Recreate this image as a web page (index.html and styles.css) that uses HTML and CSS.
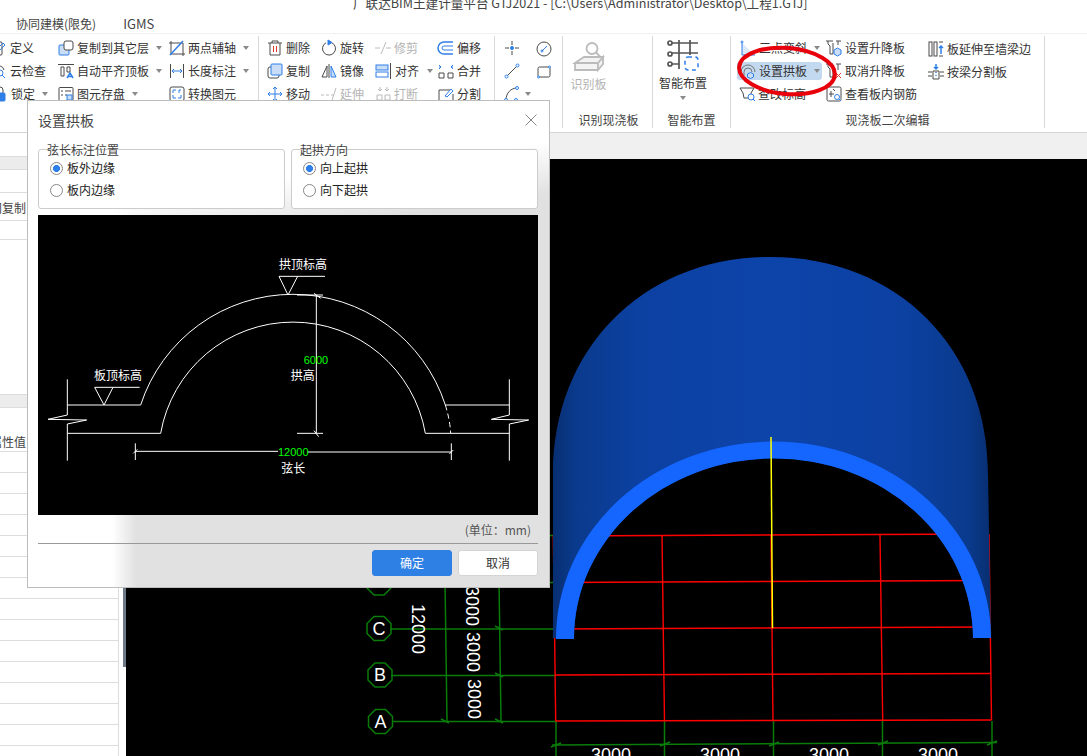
FILE: index.html
```html
<!DOCTYPE html>
<html lang="zh-CN">
<head>
<meta charset="utf-8">
<title>广联达BIM土建计量平台 GTJ2021</title>
<link rel="stylesheet" href="styles.css">
</head>
<body>
<div class="app">
  <div class="titlebar"><span class="title">广联达BIM土建计量平台 GTJ2021 - [C:\Users\Administrator\Desktop\工程1.GTJ]</span></div>
  <div class="tabs"><span class="tab">协同建模(限免)</span><span class="tab tab-en">IGMS</span></div>

  <div class="ribbon">
    <div class="group g-a">
      <div class="cols">
        <div class="col w67">
          <div class="item"><svg class="ic" viewBox="0 0 16 16"><rect x="1" y="2" width="10" height="13" rx="1"/><path class="b" d="M4 11l8-8 2 2-8 8-3 1z"/></svg>定义</div>
          <div class="item"><svg class="ic" viewBox="0 0 16 16"><path d="M4 13a4 4 0 0 1 0-8 5 5 0 0 1 9 2"/><circle class="b" cx="9" cy="10" r="3"/><path class="b" d="M11 12l3 3"/></svg>云检查</div>
          <div class="item"><svg class="ic ml1" viewBox="0 0 16 16"><path d="M5 7V4a3 3 0 0 1 6 0v3"/><rect class="b fb" x="3" y="7" width="10" height="8" rx="1"/></svg>锁定<i class="arrow"></i></div>
        </div>
        <div class="col w111">
          <div class="item"><svg class="ic" viewBox="0 0 16 16"><rect class="b fl" x="1" y="5" width="10" height="10" rx="1"/><rect class="fw" x="6" y="1" width="9" height="9" rx="2"/></svg>复制到其它层<i class="arrow"></i></div>
          <div class="item"><svg class="ic" viewBox="0 0 16 16"><path d="M0 1.500h16M3 4h3v9H3zM9 4h3v5H9z"/><path class="b s2" d="M9 15l3-5 3 5M10 13.500h4"/></svg>自动平齐顶板<i class="arrow"></i></div>
          <div class="item"><svg class="ic" viewBox="0 0 16 16"><rect x="1" y="1.500" width="14" height="13" rx="1"/><path d="M3 5h2M7 5h6M3 9h2M7 9h2"/><rect class="b fl" x="9" y="9" width="5" height="5"/></svg>图元存盘<i class="arrow"></i></div>
        </div>
        <div class="col">
          <div class="item"><svg class="ic" viewBox="0 0 16 16"><path d="M2 3h12v11H2zM0 3h2M14 14h2M2 1v2M14 14v2"/><path class="b s2" d="M1 15L14 1"/></svg>两点辅轴<i class="arrow"></i></div>
          <div class="item"><svg class="ic" viewBox="0 0 16 16"><path d="M1.500 1v14M14.500 1v14"/><path class="b" d="M3 8h10M5 6L3 8l2 2M11 6l2 2-2 2"/></svg>长度标注<i class="arrow"></i></div>
          <div class="item"><svg class="ic" viewBox="0 0 16 16"><rect x="1" y="1" width="14" height="14" rx="2"/><path class="b" d="M4 7V4h3M12 4h-2v3M4 9v3h3M9 12h3V9"/></svg>转换图元</div>
        </div>
      </div>
    </div>

    <div class="group g-b">
      <div class="cols">
        <div class="col w54">
          <div class="item"><svg class="ic" viewBox="0 0 16 16"><path d="M1 3h14M5 3V1h6v2M3 3v12h10V3"/><path class="r" d="M6.500 6v6M9.500 6v6"/></svg>删除</div>
          <div class="item"><svg class="ic" viewBox="0 0 16 16"><rect x="1" y="4" width="11" height="11" rx="2"/><rect class="b fl" x="4" y="1" width="11" height="11" rx="1"/></svg>复制</div>
          <div class="item"><svg class="ic" viewBox="0 0 16 16"><path class="b" d="M8 1v14M1 8h14M6 3l2-2 2 2M6 13l2 2 2-2M3 6L1 8l2 2M13 6l2 2-2 2"/></svg>移动</div>
        </div>
        <div class="col w54">
          <div class="item"><svg class="ic" viewBox="0 0 16 16"><path d="M5 2.800A6.500 6.500 0 1 0 11 2.800"/><path class="b fb" d="M7 0l4 2.500L7 5z"/></svg>旋转</div>
          <div class="item"><svg class="ic" viewBox="0 0 16 16"><path d="M6 3L1 14h5z"/><path class="b fl" d="M10 3l5 11h-5z"/><path d="M8 1v14"/></svg>镜像</div>
          <div class="item dim"><svg class="ic" viewBox="0 0 16 16"><path d="M0 9h3M5 9h3M10 9h2M15 2l-4 12"/></svg>延伸</div>
        </div>
        <div class="col w63">
          <div class="item dim"><svg class="ic" viewBox="0 0 16 16"><path d="M0 8h5M11 8h5M11 2L6 14"/></svg>修剪</div>
          <div class="item tight"><svg class="ic" viewBox="0 0 16 16"><rect class="b fl" x="1" y="2" width="12" height="5"/><rect class="b" x="1" y="9" width="12" height="5"/><path d="M15.500 0v16"/></svg>对齐<i class="arrow"></i></div>
          <div class="item dim"><svg class="ic" viewBox="0 0 16 16"><path d="M2 9h5v5H2zM10 9h5v5h-5zM5 1v4M3 3l2 2 2-2M12 1v4M10 3l2 2 2-2"/></svg>打断</div>
        </div>
        <div class="col">
          <div class="item"><svg class="ic" viewBox="0 0 16 16"><path class="b s2" d="M15 2H6a6 6 0 0 0 0 12h9"/><path class="b" d="M15 6H6a2 2 0 0 0 0 4h9"/></svg>偏移</div>
          <div class="item"><svg class="ic" viewBox="0 0 16 16"><path d="M1 10h5v5H1zM10 10h5v5h-5z"/><path class="b" d="M1 2l2 2-2 2M3 4H1M15 2l-2 2 2 2M13 4h2"/></svg>合并</div>
          <div class="item"><svg class="ic" viewBox="0 0 16 16"><path d="M12 4H1v11h14V8"/><path class="b" d="M7 10l6-7 2 2-6 6z"/></svg>分割</div>
        </div>
      </div>
    </div>

    <div class="group g-c">
      <div class="cols">
        <div class="col w32">
          <div class="item"><svg class="ic" viewBox="0 0 16 16"><path d="M1 8h4M11 8h4M8 1v4M8 11v4"/><circle class="fb b" cx="8" cy="8" r="1.500"/></svg></div>
          <div class="item"><svg class="ic" viewBox="0 0 16 16"><path d="M2 14L14 2"/><circle class="b fw" cx="2.500" cy="13.500" r="1.500"/><circle class="b fw" cx="13.500" cy="2.500" r="1.500"/></svg></div>
          <div class="item"><svg class="ic" viewBox="0 0 16 16"><path d="M2 14C2 7 7 2 13 2"/><circle class="b fw" cx="2" cy="14" r="1.500"/><circle class="b fw" cx="13" cy="2" r="1.500"/><circle class="b fw" cx="12" cy="14" r="1.500"/></svg><i class="arrow a2"></i></div>
        </div>
        <div class="col">
          <div class="item"><svg class="ic" viewBox="0 0 16 16"><circle cx="8" cy="8" r="7"/><path class="b" d="M6 10l5-5"/><circle class="b" cx="6" cy="10" r="1"/></svg></div>
          <div class="item"><svg class="ic" viewBox="0 0 16 16"><rect x="2" y="3" width="12" height="10" rx="1.500"/><circle class="b fw" cx="2.500" cy="13" r="1"/><circle class="b fw" cx="13.500" cy="3" r="1"/></svg></div>
        </div>
      </div>
    </div>

    <div class="group g-d">
      <div class="big dim2">
        <svg class="ic-big" viewBox="0 0 30 30"><circle cx="18" cy="6.500" r="5.500"/><path d="M22 10.500l4 4"/><path class="gf" d="M1 21l9-6h19l-5 6zM1 21h23v7H1zM24 21l5-6v7l-5 6z"/></svg>
        <span class="big-label">识别板</span>
      </div>
      <div class="glabel">识别现浇板</div>
    </div>

    <div class="group g-e">
      <div class="big">
        <svg class="ic-big dark" viewBox="0 0 30 30"><path d="M11 0v29M22 0v15M4 3h26M4 13h26M4 24h7"/><circle class="fw2" cx="2" cy="3" r="2"/><circle class="fw2" cx="2" cy="14" r="2"/><circle class="fw2" cx="2" cy="24" r="2"/><rect class="b s2" x="17" y="17" width="13" height="13" rx="3" stroke-dasharray="4 3.400"/></svg>
        <span class="big-label">智能布置</span>
        <i class="arrow a3"></i>
      </div>
      <div class="glabel">智能布置</div>
    </div>

    <div class="group g-f">
      <div class="cols h69">
        <div class="col w86">
          <div class="item"><svg class="ic" viewBox="0 0 16 16"><path class="fl0" d="M2 3v12h13z"/><path class="b" d="M2 2v13h13"/><circle class="b fw" cx="2" cy="2" r="1"/></svg>三点变斜<i class="arrow"></i></div>
          <div class="item active"><svg class="ic" viewBox="0 0 16 16"><path d="M1 14V9a7 7 0 0 1 14 0M4 13V9a4 4 0 0 1 8 0" class="g"/><path class="b fl" d="M10.500 9.500l3 1.500v3l-3 1.500-3-1.500v-3z"/></svg>设置拱板<i class="arrow"></i></div>
          <div class="item tight2"><svg class="ic" viewBox="0 0 16 16"><path d="M0 2h14l-3 5v5H4L3 7z"/><circle class="b fw" cx="11" cy="11" r="3"/><path class="b" d="M13 13l2 2"/></svg>查改标高</div>
        </div>
        <div class="col w102">
          <div class="item"><svg class="ic" viewBox="0 0 16 16"><path d="M0 1h7M10 1h5M2 1v3l2 2v8h3V3M12 1v4"/><path class="b fl" d="M11.500 8l3.500 2v4l-3.500 2L8 14v-4z"/></svg>设置升降板</div>
          <div class="item"><svg class="ic" viewBox="0 0 16 16"><path d="M0 1h7M10 1h5M2 1v3l2 2v8h3V3M12 1v6"/><path class="r" d="M10 10l5 5M15 10l-5 5"/></svg>取消升降板</div>
          <div class="item"><svg class="ic" viewBox="0 0 16 16"><rect x="1" y="1" width="14" height="14" rx="1.500"/><path d="M5 5v6M3 8h5M7 3l2 2"/><circle class="b fw" cx="11" cy="11" r="2.500"/><path class="b" d="M13 13l2 2"/></svg>查看板内钢筋</div>
        </div>
        <div class="col">
          <div class="item"><svg class="ic" viewBox="0 0 16 16"><rect x="1" y="1" width="3" height="14"/><rect x="6" y="1" width="3" height="14"/><path d="M11 1h4M11 15h4"/><path class="b s2" d="M13 13V5M11 7l2-2 2 2"/></svg>板延伸至墙梁边</div>
          <div class="item"><svg class="ic" viewBox="0 0 16 16"><path d="M0 8h4M12 8h4M0 12h4M12 12h4M5 7h6v8H5z"/><path class="b s2" d="M8 0v5M6 3l2 2 2-2M8 8v1M8 11v1"/></svg>按梁分割板</div>
        </div>
      </div>
      <div class="glabel">现浇板二次编辑</div>
    </div>
  </div>

  <div class="main">
    <div class="side">
      <div class="s-top"></div>
      <div class="s-head"></div>
      <div class="s-row h23"></div>
      <div class="s-row h28 cut"><span class="cut-a">层间复制</span></div>
      <div class="s-row h19"></div>
      <div class="s-blank"></div>
      <div class="s-head"></div>
      <div class="s-row h44 cut"><span class="cut-b">属性值</span></div>
      <div class="s-fill"></div>
    </div>
    <div class="splitter"><div class="thumb"><i class="thumb-arrow"></i></div></div>
    <div class="work">
      <div class="strip"></div>
      <svg class="canvas" viewBox="126 159 961 597">
        <defs>
          <linearGradient id="domeFill" x1="0" x2="1" y1="0" y2="0">
            <stop offset="0" stop-color="#082e70"/>
            <stop offset=".05" stop-color="#0a3a8c"/>
            <stop offset=".2" stop-color="#0c41a2"/>
            <stop offset=".5" stop-color="#0d44aa"/>
            <stop offset=".8" stop-color="#0c41a2"/>
            <stop offset=".95" stop-color="#0a3a8c"/>
            <stop offset="1" stop-color="#082e70"/>
          </linearGradient>
        </defs>
        <g class="axis">
          <path d="M392 721.500H556M391 675.500H556M390 629H556M390 582.500H556M500 535.500H556"/>
          <path d="M445 580L447 722M499 580L501 722"/>
          <path d="M556 721V756M664.500 721V756M773.500 721V756M882.500 721V756M992 721V756"/>
          <path d="M552 745L997 742.500"/>
          <path d="M551 747l10-4M660 746l10-4M769 746l10-4M878 745l10-4M987 745l10-4M441 719l8 4M495 719l8 4M495 673l8 4M495 626l8 4"/>
          <polygon points="-5,-12 5,-12 12,-5 12,5 5,12 -5,12 -12,5 -12,-5" transform="translate(380.500,721.500)"/>
          <polygon points="-5,-12 5,-12 12,-5 12,5 5,12 -5,12 -12,5 -12,-5" transform="translate(380,675)"/>
          <polygon points="-5,-12 5,-12 12,-5 12,5 5,12 -5,12 -12,5 -12,-5" transform="translate(379,628.500)"/>
          <polygon points="-5,-12 5,-12 12,-5 12,5 5,12 -5,12 -12,5 -12,-5" transform="translate(379,583)"/>
        </g>
        <g class="grid">
          <path d="M553 536L989 534M553 582.500L990 580.500M554 629L990 627M555 675L990.500 673.500M555.500 721L991.500 720"/>
          <path d="M553.300 535L555.700 721M662 535L664.500 721M771 535L773 721M880 535L882.700 720M989 534L991.500 720"/>
        </g>
        <path class="dome" fill-rule="evenodd" d="M553 638V474C553 348 644 257 770.500 257S988 348 988 474L991 638ZM574 638A199.500 180 0 0 1 973 638Z"/>
        <path class="arch" fill-rule="evenodd" d="M556 639A217.500 197 0 0 1 991 638L973 638A199.500 180 0 0 0 574 639Z"/>
        <path class="yellow" d="M771 437L772.500 628"/>
        <g class="labels">
          <text x="380.500" y="727.500">A</text>
          <text x="380" y="681">B</text>
          <text x="379" y="634.500">C</text>
          <text x="611" y="761">3000</text>
          <text x="720" y="761">3000</text>
          <text x="829" y="761">3000</text>
          <text x="938" y="761">3000</text>
          <text transform="translate(412,629) rotate(90)">12000</text>
          <text transform="translate(466,606) rotate(90)">3000</text>
          <text transform="translate(467,652) rotate(90)">3000</text>
          <text transform="translate(468,699) rotate(90)">3000</text>
        </g>
      </svg>
    </div>
  </div>
</div>

<svg class="ring" viewBox="0 0 110 60"><ellipse cx="55" cy="30" rx="48" ry="23" transform="rotate(5 55 30)"/></svg>

<div class="dialog">
  <div class="d-head"><span class="d-title">设置拱板</span><svg class="d-close" viewBox="0 0 12 12"><path d="M.5.5l11 11M11.500.5l-11 11"/></svg></div>
  <div class="d-groups">
    <div class="gbox">
      <div class="legend">弦长标注位置</div>
      <div class="radio"><i class="dot on"></i>板外边缘</div>
      <div class="radio"><i class="dot"></i>板内边缘</div>
    </div>
    <div class="gbox">
      <div class="legend">起拱方向</div>
      <div class="radio"><i class="dot on"></i>向上起拱</div>
      <div class="radio"><i class="dot"></i>向下起拱</div>
    </div>
  </div>
  <svg class="figure" viewBox="0 -75 1500 900">
    <path class="fw-line" fill="none" d="M723 109H861M723 109L750 165L779 109M170 442H305M170 442L198 495L225 442"/>
    <path class="fw-line" fill="none" d="M308 495A480.500 480.500 0 0 1 1222 495M368 580A403 403 0 0 1 1162 580"/>
    <path class="fw-line" fill="none" stroke-dasharray="16 10" d="M1222 495Q1236 540 1238 580"/>
    <path class="fw-line" fill="none" d="M88 418V525L30 538L146 540L88 552V662M88 495H308M88 580H368M1222 495H1414M1162 580H1414M1414 418V525L1360 538L1472 540L1414 552V662"/>
    <path class="fw-line" fill="none" d="M835 165V580M777 165H855M777 580H855M828 160L848 175M828 572L842 590"/>
    <path class="fw-line" fill="none" d="M292 634H720M808 636H1240M292 610V660M1240 610V660M286 640L298 628M1234 642L1246 630"/>
    <g class="wtext">
      <text x="723" y="86">拱顶标高</text>
      <text x="168" y="419">板顶标高</text>
      <text x="758" y="419">拱高</text>
      <text x="730" y="700">弦长</text>
    </g>
    <g class="gtext">
      <text x="797" y="372">6000</text>
      <text x="720" y="648">12000</text>
    </g>
  </svg>
  <div class="d-unit">(单位：mm)</div>
  <div class="d-foot">
    <button class="btn primary">确定</button>
    <button class="btn">取消</button>
  </div>
</div>
</body>
</html>
```

FILE: styles.css
```css
* { box-sizing: border-box; }
html, body { margin: 0; padding: 0; }
body {
  width: 1087px;
  height: 756px;
  overflow: hidden;
  position: relative;
  background: #fff;
  color: #333;
  font-family: "Noto Sans CJK SC", "Liberation Sans", sans-serif;
  font-size: 12px;
}
.app { display: flex; flex-direction: column; height: 756px; }

.titlebar { height: 14px; padding-left: 353px; overflow: hidden; }
.title { display: block; margin-top: -5px; font-size: 12.600px; line-height: 16px; color: #444; white-space: nowrap; }
.tabs { height: 19px; display: flex; gap: 27px; padding-left: 16px; align-items: center; color: #444; font-size: 12px; line-height: 16px; }
.tab-en { font-size: 13px; }

.ribbon { height: 100px; flex: none; display: flex; border-top: 1px solid #f0f0f0; border-bottom: 1px solid #d4d4d4; padding-top: 2px; }
.group { height: 92px; border-right: 1px solid #d8d8d8; display: flex; flex-direction: column; flex: none; }
.g-a { width: 268px; margin-left: -9px; }
.g-b { width: 236px; padding-left: 8px; }
.g-c { width: 68px; padding-left: 9px; }
.g-d { width: 90px; }
.g-e { width: 78px; }
.g-f { width: 314px; padding-left: 9px; }

.cols { display: flex; height: 69px; padding-top: 1px; }
.col { display: flex; flex-direction: column; }
.w32 { width: 32px; } .w54 { width: 54px; } .w63 { width: 63px; }
.w67 { width: 67px; } .w86 { width: 86px; } .w102 { width: 102px; } .w111 { width: 111px; }

.item { height: 23px; display: flex; align-items: center; gap: 3px; white-space: nowrap; line-height: 16px; color: #333; }
.item.dim { color: #b4b4b4; }
.item.dim .ic { stroke: #bbb; }
.item.tight { gap: 4px; }
.item.tight2 { gap: 2px; }
.item.active { background: #c3d9f0; border-radius: 3px; margin: 2px 0 2px -3px; height: 19px; padding-left: 3px; width: 85px; }

.ic { width: 16px; height: 16px; flex: none; fill: none; stroke: #4a4a4a; stroke-width: 1; overflow: visible; }
.ml1 { margin-left: 1px; }
.ic .b, .ic-big .b { stroke: #2f7fe8; }
.ic .r { stroke: #e2382c; }
.ic .g { stroke: #777; }
.ic .s2, .ic-big .s2 { stroke-width: 1.500; }
.ic .fl { fill: #c9def6; }
.ic .fb { fill: #2f7fe8; }
.ic .fw { fill: #fff; }
.ic .fl0 { fill: #dbe8f8; stroke: none; }

.arrow { width: 0; height: 0; margin-left: 4px; border-left: 3px solid transparent; border-right: 3px solid transparent; border-top: 4px solid #8a8a8a; flex: none; }
.arrow.a2 { margin-left: 2px; }
.arrow.a3 { margin: 5px 0 0; }

.big { height: 76px; display: flex; flex-direction: column; align-items: center; padding-top: 4px; }
.g-d .big { padding-right: 38px; }
.g-e .big { padding-right: 17px; }
.ic-big { width: 30px; height: 30px; fill: none; stroke: #555; stroke-width: 1.700; flex: none; overflow: visible; }
.dim2 .ic-big { stroke: #bbb; stroke-width: 1.800; margin-top: 2px; }
.dim2 .ic-big .gf { fill: #f3f3f3; }
.big-label { margin-top: 5px; line-height: 16px; color: #333; }
.dim2 .big-label { color: #b4b4b4; margin-top: 4px; }
.glabel { height: 16px; line-height: 16px; text-align: center; color: #444; }
.g-d .glabel { padding-left: 2px; }
.g-f .glabel { margin-top: 7px; padding-right: 9px; }

.main { flex: 1; display: flex; min-height: 0; }
.side { width: 119px; flex: none; border-right: 1px solid #ddd; display: flex; flex-direction: column; overflow: hidden; background: #fff; }
.s-top { height: 24px; flex: none; border-bottom: 1px solid #ddd; }
.s-head { height: 13px; flex: none; background: #ececec; border-bottom: 1px solid #ddd; }
.s-row { flex: none; border-bottom: 1px solid #ddd; white-space: nowrap; }
.h19 { height: 19px; } .h23 { height: 23px; } .h28 { height: 28px; } .h44 { height: 44px; }
.cut { line-height: 16px; color: #444; }
.cut-a { display: block; margin: 7px 0 0 -22px; }
.cut-b { display: block; margin: 26px 0 0 -10px; }
.s-blank { height: 155px; flex: none; border-bottom: 1px solid #ddd; }
.s-fill { flex: 1; background: repeating-linear-gradient(#fff 0 20px, #ddd 20px 21px); }

.splitter { width: 7px; flex: none; display: flex; flex-direction: column; padding: 26px 0 89px 3px; border-left: 1px solid transparent; }
.thumb { flex: 1; background: #6d7886; display: flex; align-items: center; justify-content: center; }
.thumb-arrow { width: 0; height: 0; border-top: 3px solid transparent; border-bottom: 3px solid transparent; border-right: 3px solid #c8ced6; margin-top: 142px; }

.work { flex: 1; display: flex; flex-direction: column; min-width: 0; }
.strip { height: 26px; background: #f0f0f0; flex: none; }
.canvas { display: block; flex: 1; width: 100%; min-height: 0; background: #000; }
.axis { fill: none; stroke: #0a7c0a; stroke-width: 1.500; }
.grid { fill: none; stroke: #f00; stroke-width: 1.400; }
.dome { fill: url(#domeFill); }
.arch { fill: #1565ff; }
.yellow { stroke: #ff0; stroke-width: 1.500; fill: none; }
.labels { fill: #fff; font-family: "Liberation Sans", sans-serif; font-size: 18px; text-anchor: middle; }

.ring { position: absolute; left: 732px; top: 41px; width: 110px; height: 60px; fill: none; stroke: #e8000b; stroke-width: 4; overflow: visible; }

.dialog {
  position: absolute;
  left: 27px;
  top: 100px;
  width: 523px;
  height: 488px;
  padding: 0 11px 0 10px;
  border: 1px solid #bdbdbd;
  background:
    linear-gradient(172deg, #fff 112px, rgba(255, 255, 255, 0) 165px),
    linear-gradient(to right, #fff 84px, #e1e1e1 108px);
}
.d-head { height: 48px; display: flex; align-items: flex-start; justify-content: space-between; padding-top: 9px; }
.d-title { font-size: 14px; line-height: 20px; color: #444; }
.d-close { width: 12px; height: 12px; margin: 4px 1px 0 0; stroke: #888; fill: none; }
.d-groups { display: flex; gap: 6px; }
.gbox { width: 247px; height: 60px; border: 1px solid #ccc; border-radius: 3px; background: #fff; padding-left: 11px; }
.legend { margin: -7px 0 0 -3px; line-height: 14px; color: #444; }
.radio { height: 22px; display: flex; align-items: center; gap: 4px; color: #222; line-height: 16px; }
.dot { width: 13px; height: 13px; border: 1px solid #888; border-radius: 50%; flex: none; background: #fff; }
.dot.on { background: radial-gradient(circle, #2f7fe8 0 3.200px, #fff 3.800px); }
.figure { display: block; width: 500px; height: 300px; margin-top: 6px; background: #000; }
.fw-line { stroke: #fff; stroke-width: 3; }
.wtext text { fill: #fff; font-size: 36px; }
.gtext text { fill: #0f0; font-size: 33px; font-family: "Liberation Sans", sans-serif; }
.d-unit { height: 29px; border-bottom: 1px solid #999; text-align: right; padding: 6px 7px 0 0; line-height: 18px; color: #555; }
.d-foot { display: flex; justify-content: flex-end; gap: 6px; margin-top: 6px; }
.btn { width: 80px; height: 26px; padding: 0; border: 1px solid #d4d4d4; border-radius: 3px; background: #fff; color: #333; font: inherit; line-height: 16px; }
.btn.primary { background: #2f80e4; border-color: #2f80e4; color: #fff; }
```
